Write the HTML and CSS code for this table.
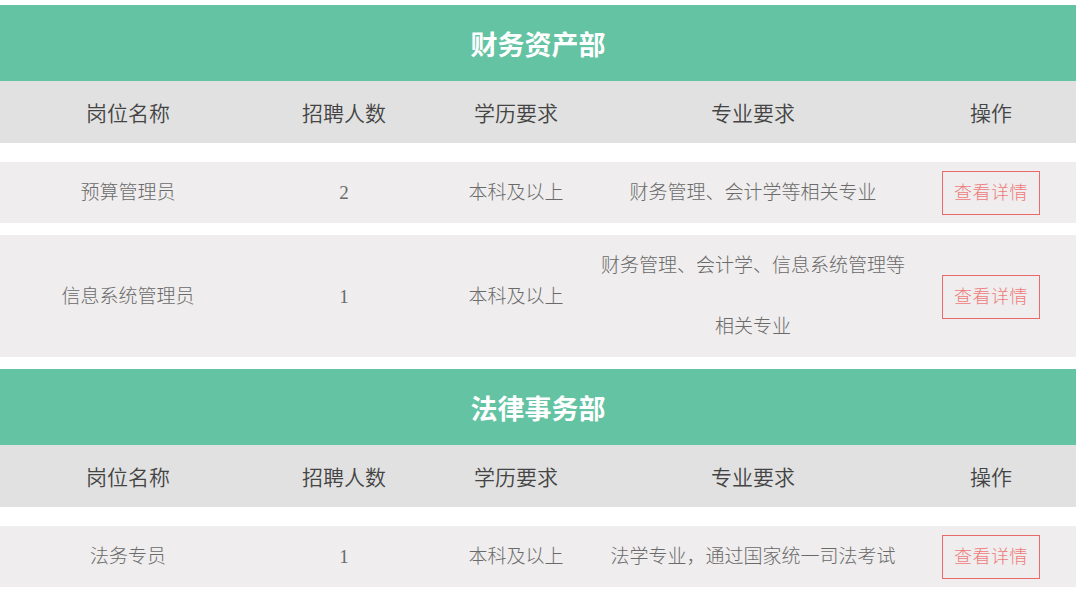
FILE: index.html
```html
<!DOCTYPE html>
<html lang="zh-CN">
<head>
<meta charset="utf-8">
<title>招聘岗位</title>
<link rel="stylesheet" href="styles.css">
</head>
<body>
<div class="page">
  <section class="dept">
    <h2 class="dept-title">财务资产部</h2>
    <div class="grid head">
      <div>岗位名称</div><div>招聘人数</div><div>学历要求</div><div>专业要求</div><div>操作</div>
    </div>
    <div class="grid data">
      <div>预算管理员</div><div>2</div><div>本科及以上</div><div>财务管理、会计学等相关专业</div><div><a class="btn">查看详情</a></div>
    </div>
    <div class="grid data">
      <div>信息系统管理员</div><div>1</div><div>本科及以上</div><div class="major">财务管理、会计学、信息系统管理等相关专业</div><div><a class="btn">查看详情</a></div>
    </div>
  </section>
  <section class="dept">
    <h2 class="dept-title">法律事务部</h2>
    <div class="grid head">
      <div>岗位名称</div><div>招聘人数</div><div>学历要求</div><div>专业要求</div><div>操作</div>
    </div>
    <div class="grid data">
      <div>法务专员</div><div>1</div><div>本科及以上</div><div>法学专业，通过国家统一司法考试</div><div><a class="btn">查看详情</a></div>
    </div>
  </section>
</div>
</body>
</html>
```

FILE: styles.css
```css
html, body {
  margin: 0;
  padding: 0;
  background: #ffffff;
}
.page {
  width: 1076px;
  padding-top: 5px;
  font-family: "Noto Sans CJK SC", sans-serif;
}
.dept {
  display: flex;
  flex-direction: column;
}
.dept-title {
  margin: 0;
  height: 76px;
  background: #64c3a3;
  color: #ffffff;
  font-size: 27px;
  font-weight: 700;
  display: flex;
  align-items: center;
  justify-content: center;
}
.grid {
  display: grid;
  grid-template-columns: 256px 176px 168px 306px 170px;
  text-align: center;
  align-items: center;
}
.head {
  height: 62px;
  background: #e1e1e1;
  color: #444444;
  font-size: 21px;
  font-weight: 350;
  margin-bottom: 19px;
}
.data {
  background: #efeded;
  color: #6a6a6a;
  font-family: "Liberation Serif", "Noto Sans CJK SC", serif;
  font-weight: 300;
  font-size: 19px;
  line-height: 61px;
  margin-bottom: 12px;
}
.major {
  line-height: 61px;
}
.btn {
  display: inline-flex;
  align-items: center;
  justify-content: center;
  box-sizing: border-box;
  width: 98px;
  height: 44px;
  border: 1px solid #e86a6a;
  color: #ee7b7b;
  font-size: 18px;
  line-height: 1;
  letter-spacing: 0.5px;
}
```
